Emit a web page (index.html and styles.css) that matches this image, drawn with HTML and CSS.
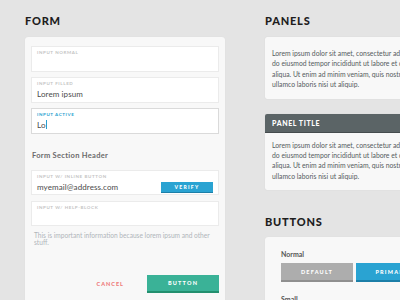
FILE: index.html
```html
<!DOCTYPE html>
<html>
<head>
    <title>UI Kit</title>
    <link rel="stylesheet" href="styles.css">
</head>
<body>
    <div class="page">
        <div class="column form-column">
            <h2 class="section-title">FORM</h2>
            <div class="card form-card">
                <div class="field">
                    <div class="field-label">INPUT NORMAL</div>
                    <div class="field-value"></div>
                </div>
                <div class="field">
                    <div class="field-label">INPUT FILLED</div>
                    <div class="field-value">Lorem ipsum</div>
                </div>
                <div class="field active">
                    <div class="field-label">INPUT ACTIVE</div>
                    <div class="field-value">Lo<span class="caret"></span></div>
                </div>

                <h3 class="form-section">Form Section Header</h3>

                <div class="field small inline">
                    <div class="inline-text">
                        <div class="field-label">INPUT W/ INLINE BUTTON</div>
                        <div class="field-value">myemail@address.com</div>
                    </div>
                    <button class="btn-verify">VERIFY</button>
                </div>
                <div class="field small">
                    <div class="field-label">INPUT W/ HELP-BLOCK</div>
                    <div class="field-value"></div>
                </div>
                <p class="help-block">This is important information because lorem ipsum and other stuff.</p>

                <div class="form-actions">
                    <span class="btn-cancel">CANCEL</span>
                    <button class="btn-submit">BUTTON</button>
                </div>
            </div>
        </div>

        <div class="column right-column">
            <h2 class="section-title">PANELS</h2>
            <div class="panel">
                <div class="panel-body">
                    <div class="line">Lorem ipsum dolor sit amet, consectetur adipisicing elit</div>
                    <div class="line">do eiusmod tempor incididunt ut labore et dolore</div>
                    <div class="line">aliqua. Ut enim ad minim veniam, quis nostrud</div>
                    <div class="line">ullamco laboris nisi ut aliquip.</div>
                </div>
            </div>
            <div class="panel titled">
                <div class="panel-title">PANEL TITLE</div>
                <div class="panel-body">
                    <div class="line">Lorem ipsum dolor sit amet, consectetur adipisicing elit</div>
                    <div class="line">do eiusmod tempor incididunt ut labore et dolore</div>
                    <div class="line">aliqua. Ut enim ad minim veniam, quis nostrud</div>
                    <div class="line">ullamco laboris nisi ut aliquip.</div>
                </div>
            </div>

            <h2 class="section-title buttons-title">BUTTONS</h2>
            <div class="card buttons-card">
                <div class="group-label">Normal</div>
                <div class="button-row">
                    <button class="btn btn-default">DEFAULT</button>
                    <button class="btn btn-primary">PRIMARY</button>
                </div>
                <div class="group-label">Small</div>
            </div>
        </div>
    </div>
</body>
</html>
```

FILE: styles.css
```css
html, body {
    margin: 0;
    padding: 0;
}

body {
    font-family: Lato, "Open Sans", sans-serif;
    background-color: #e4e4e4;
    width: 400px;
    height: 300px;
    overflow: hidden;
}

.page {
    display: flex;
    gap: 40px;
    padding-left: 25px;
    width: 600px;
}

.column {
    width: 200px;
    flex: none;
    padding-top: 14px;
}

.right-column {
    width: 240px;
}

.section-title {
    margin: 0 0 10px;
    font-size: 11px;
    line-height: 13px;
    font-weight: 900;
    letter-spacing: 0.8px;
    color: #1e1e1e;
}

.card {
    background-color: #f8f8f8;
    border-radius: 3px;
    box-shadow: 0 0 1px rgba(0, 0, 0, 0.08);
}

/* form */

.form-card {
    padding: 9px 6px 20px;
    height: 270px;
    box-sizing: border-box;
}

.field {
    background-color: #fff;
    border: 1px solid #ebebeb;
    height: 26px;
    box-sizing: border-box;
    padding: 3px 5px 0;
    margin-bottom: 5px;
}

.field.small {
    height: 25px;
    margin-bottom: 6px;
}

.field.active {
    border-color: #dadada;
}

.field-label {
    font-size: 4.5px;
    line-height: 6px;
    letter-spacing: 0.6px;
    font-weight: 700;
    color: #c4c4c4;
    margin-bottom: 2px;
}

.active .field-label {
    color: #2a9fd0;
}

.field-value {
    font-size: 8px;
    line-height: 10px;
    color: #4a4a4a;
    letter-spacing: 0.1px;
}

.caret {
    display: inline-block;
    width: 1px;
    height: 9px;
    background-color: #2a9fd0;
    vertical-align: -1px;
}

.form-section {
    margin: 17px 0 9px 1px;
    font-size: 7.5px;
    line-height: 10px;
    font-weight: 700;
    letter-spacing: 0.3px;
    color: #6a6a6a;
}

.field.inline {
    display: flex;
    align-items: flex-start;
    justify-content: space-between;
    padding-right: 5px;
}

.btn-verify {
    margin-top: 8px;
    width: 52px;
    height: 11px;
    padding: 0;
    border: none;
    border-bottom: 1px solid #1c7fa8;
    background-color: #2aa3d2;
    color: #fff;
    font-family: inherit;
    font-size: 5px;
    font-weight: 900;
    letter-spacing: 1.3px;
}

.help-block {
    margin: 4px 0 0 3px;
    font-size: 6.6px;
    line-height: 7px;
    color: #b0b5ba;
}

.form-actions {
    display: flex;
    justify-content: flex-end;
    align-items: center;
    gap: 23px;
    margin-top: 29px;
}

.btn-cancel {
    font-size: 5.5px;
    font-weight: 900;
    letter-spacing: 1px;
    color: #ee7b7b;
}

.btn-submit {
    width: 72px;
    height: 18px;
    padding: 0;
    border: none;
    border-bottom: 2px solid #23906f;
    background-color: #3ab297;
    color: #fff;
    font-family: inherit;
    font-size: 5.5px;
    font-weight: 900;
    letter-spacing: 1.2px;
}

/* panels */

.panel {
    background-color: #f8f8f8;
    border-radius: 2px;
    box-shadow: 0 0 1px rgba(0, 0, 0, 0.15);
    margin-bottom: 15px;
    overflow: hidden;
}

.panel-body {
    padding: 11px 7px 9px;
}

.titled .panel-body {
    padding-top: 7px;
}

.line {
    font-size: 6.8px;
    line-height: 10.4px;
    color: #555b60;
    white-space: nowrap;
}

.panel-title {
    background-color: #5b6466;
    border-bottom: 1px solid #454c4e;
    color: #fff;
    height: 18px;
    line-height: 18px;
    padding-left: 7px;
    font-size: 7px;
    font-weight: 900;
    letter-spacing: 0.6px;
}

.buttons-title {
    margin-top: 25px;
    margin-bottom: 9px;
}

/* buttons */

.buttons-card {
    padding: 12px 16px;
    height: 80px;
}

.group-label {
    font-size: 7px;
    line-height: 10px;
    font-weight: 700;
    color: #555;
    margin-bottom: 4px;
}

.button-row {
    display: flex;
    gap: 3px;
    margin-bottom: 12px;
}

.btn {
    width: 72px;
    height: 19px;
    padding: 0;
    border: none;
    border-bottom: 2px solid #8f8f8f;
    color: #fff;
    font-family: inherit;
    font-size: 5.5px;
    font-weight: 900;
    letter-spacing: 1.2px;
    flex: none;
}

.btn-default {
    background-color: #adadad;
}

.btn-primary {
    background-color: #2aa3d2;
    border-bottom-color: #1c7fa8;
}
```
